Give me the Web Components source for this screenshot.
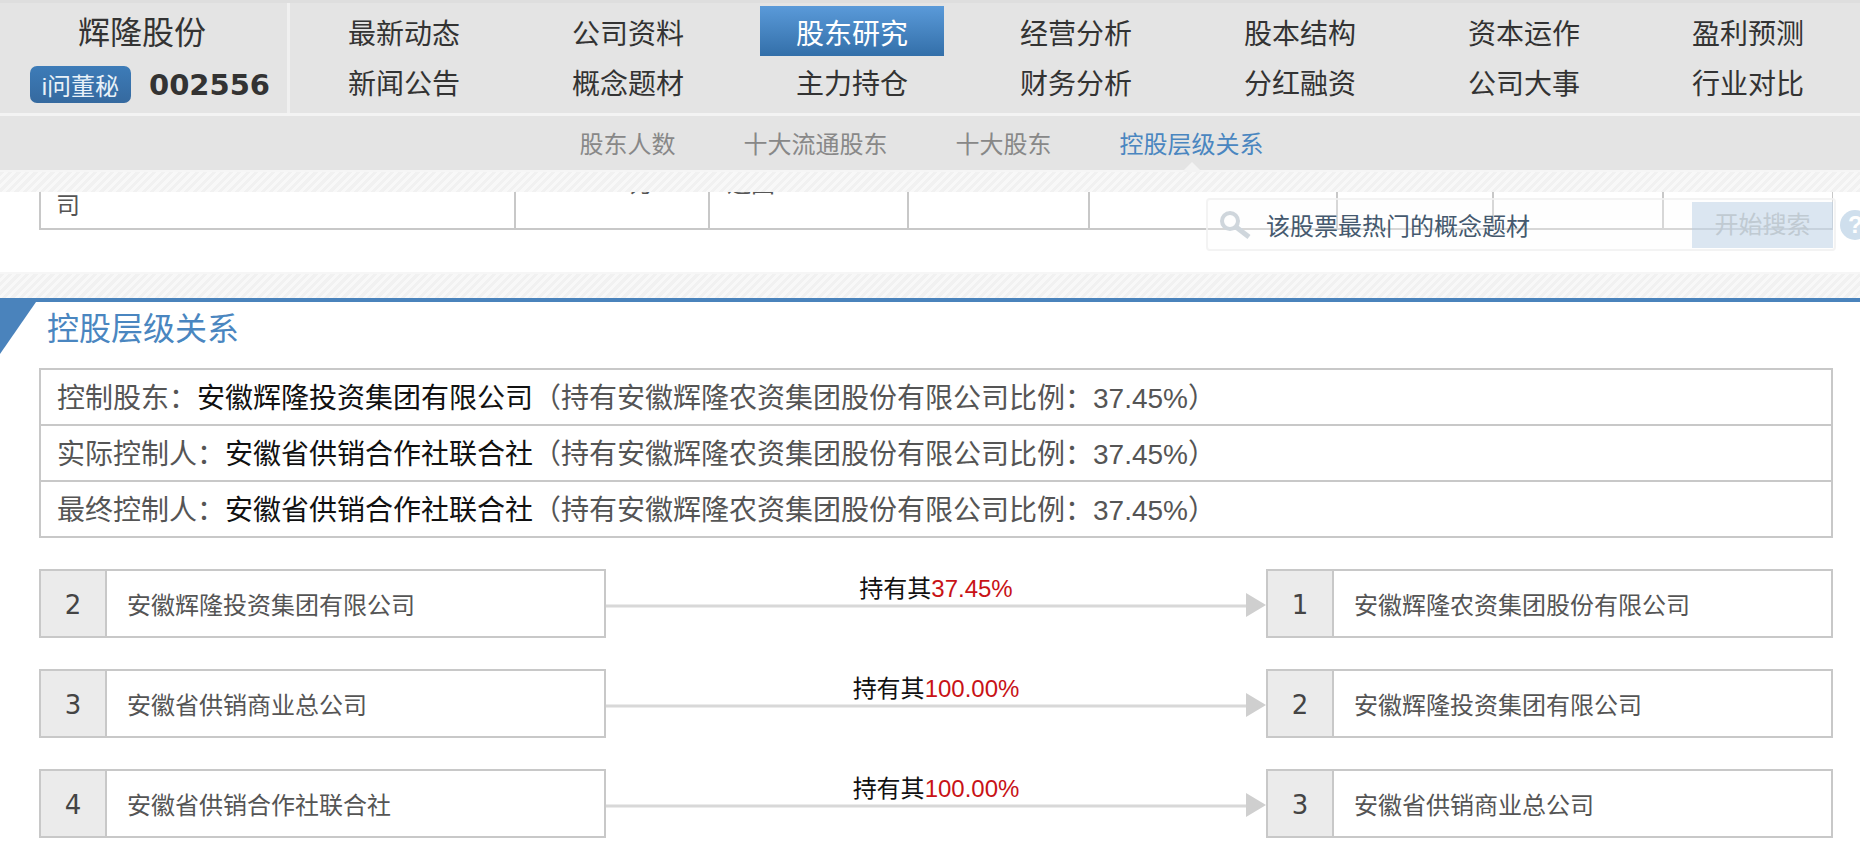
<!DOCTYPE html>
<html lang="zh-CN"><head><meta charset="utf-8"><title>控股层级关系</title>
<style>
html,body{margin:0;padding:0;height:862px;overflow:hidden;background:#fff}
body{font-family:"Liberation Sans","Noto Sans CJK SC",sans-serif;color:#333;font-size:24px}
</style></head><body>
<stock-header></stock-header>
<sub-nav></sub-nav>
<hatch-band h="22"></hatch-band>
<cut-table></cut-table>
<hatch-band h="26"></hatch-band>
<section-title>控股层级关系</section-title>
<control-table></control-table>
<chain-list></chain-list>
<search-overlay></search-overlay>
<script>
const def=(n,html)=>customElements.define(n,class extends HTMLElement{connectedCallback(){if(this.shadowRoot)return;const s=this.attachShadow({mode:'open'});s.innerHTML=typeof html==='function'?html(this):html;}});
const top1=['最新动态','公司资料','股东研究','经营分析','股本结构','资本运作','盈利预测'];
const top2=['新闻公告','概念题材','主力持仓','财务分析','分红融资','公司大事','行业对比'];
def('stock-header',()=>`<style>
:host{display:flex;background:#e4e4e4;box-sizing:border-box;border-top:3px solid #dedede;border-bottom:3px solid #f3f3f3;height:116px}
.l{box-sizing:border-box;border-right:3px solid #f0f0f0;width:290px;flex:none;display:flex;flex-direction:column;align-items:center;color:#333}
.n{font-size:32px;line-height:50px;margin-top:5px;margin-left:-3px}
.c{display:flex;align-items:center;gap:18px;margin-top:8px;margin-left:13px}
.b{width:101px;height:37px;border-radius:7px;background:linear-gradient(#3d7cb8,#35699f);color:#e8f1f8;font-size:24px;display:flex;align-items:center;justify-content:center;white-space:nowrap;overflow:hidden}
.d{font:bold 29px "DejaVu Sans",sans-serif;color:#333}
.g{flex:1;display:grid;grid-template-columns:repeat(7,1fr);grid-template-rows:50px 50px;padding:3px 0 0 2px}
.i{display:flex;align-items:center;justify-content:center;font-size:28px;color:#333}
.i span{display:block;width:184px;padding-top:6px;height:44px;line-height:46px;text-align:center}
.a span{color:#fff;background:linear-gradient(#5a9ad9,#336fa9)}
</style><div class="l"><div class="n">辉隆股份</div><div class="c"><div class="b">i问董秘</div><div class="d">002556</div></div></div>
<div class="g">${top1.concat(top2).map(t=>`<div class="i ${t=='股东研究'?'a':''}"><span>${t}</span></div>`).join('')}</div>`);
def('sub-nav',()=>`<style>
:host{display:flex;justify-content:center;gap:68px;height:54px;box-sizing:border-box;background:#e4e4e4;font-size:24px;line-height:58px;color:#888;padding-right:17px;position:relative}
.a{color:#4a86c0;position:relative}
.a::after{content:"";position:absolute;left:50%;bottom:-2px;margin-left:-10px;border:10px solid transparent;border-top:0;border-bottom-color:#f3f3f3}
</style><span>股东人数</span><span>十大流通股东</span><span>十大股东</span><span class="a">控股层级关系</span>`);
def('hatch-band',(e)=>`<style>:host{display:block;box-sizing:border-box;height:${e.getAttribute('h')}px;border-top:2px solid #f6f6f6;background:repeating-linear-gradient(135deg,#f1f1f1 0 3px,#f8f8f8 3px 6px)}</style>`);
def('cut-table',()=>`<style>
:host{display:block;height:80px;padding:0 27px 0 39px;box-sizing:border-box}
.t{display:grid;grid-template-columns:475px 194px 199px 181px 248px 156px 170px 170px;height:38px;border:solid #c8c8c8;border-width:0 0 2px 2px;box-sizing:border-box;overflow:hidden}
.t>div{border-right:2px solid #c8c8c8;font-size:24px;line-height:28px;padding-left:15px;color:#555;overflow:hidden}
.t>div.s{line-height:32px;padding:0}
.s span{display:block;margin-top:-24px}
</style><div class="t"><div>司</div><div class="s" style="padding-left:114px"><span>万</span></div><div class="s" style="padding-left:17px"><span>通国</span></div><div></div><div></div><div></div><div></div><div></div></div>`);
def('section-title',()=>`<style>
:host{display:block;height:70px;border-top:4px solid #4a83bc;box-sizing:border-box;position:relative;padding-left:47px;font-size:32px;line-height:54px;color:#4a86c0}
svg{position:absolute;left:0;top:0}
</style><svg width="36" height="52"><path d="M0 0H36L0 52Z" fill="#4a83bc"/></svg><slot></slot>`);
def('control-table',()=>{
const r=[['控制股东','安徽辉隆投资集团有限公司'],['实际控制人','安徽省供销合作社联合社'],['最终控制人','安徽省供销合作社联合社']];
return `<style>
:host{display:block;margin:0 27px 0 39px;border:solid #c8c8c8;border-width:2px 2px 0 2px}
.r{height:54px;line-height:58px;border-bottom:2px solid #c8c8c8;padding-left:16px;font-size:28px;color:#555;white-space:nowrap;overflow:hidden}
b{font-weight:normal;color:#111}
</style>${r.map(x=>`<div class="r">${x[0]}\uFF1A<b>${x[1]}</b>\uFF08持有安徽辉隆农资集团股份有限公司比例\uFF1A37.45%\uFF09</div>`).join('')}`});
customElements.define('chain-row',class extends HTMLElement{connectedCallback(){const g=a=>this.getAttribute(a);const s=this.attachShadow({mode:'open'});s.innerHTML=`<style>
:host{display:flex;height:69px;margin:0 27px 31px 39px;align-items:stretch}
.box{display:flex;border:2px solid #c8c8c8;box-sizing:border-box;height:69px;font-size:24px;color:#555;flex:none;width:567px}
.num{width:64px;background:#ebebeb;border-right:2px solid #c8c8c8;text-align:center;font:26px/69px "DejaVu Sans",sans-serif;flex:none;color:#444}
.tx{padding-left:20px;line-height:69px}
.m{flex:none;width:660px;position:relative}
.lb{text-align:center;font-size:24px;line-height:30px;margin-top:5px;color:#111}
.lb i{font-style:normal;color:#c81216}
svg{position:absolute;left:0;top:24px}
.right{flex:1;width:auto}
</style><div class="box"><div class="num">${g('a')}</div><div class="tx">${g('an')}</div></div>
<div class="m"><div class="lb">持有其<i>${g('p')}</i></div><svg width="660" height="24"><path d="M0 13H640" stroke="#d8d8d8" stroke-width="3"/><path d="M640 0L660 12L640 24Z" fill="#cfcfcf"/></svg></div>
<div class="box right"><div class="num">${g('b')}</div><div class="tx">${g('bn')}</div></div>`}});
def('chain-list',()=>`<style>:host{display:block;margin-top:31px}</style><slot></slot>`);
def('search-overlay',()=>`<style>
:host{position:absolute;left:1206px;top:198px;width:630px;height:53px;box-sizing:border-box;border:2px solid rgba(240,240,240,.8);border-radius:4px;background:rgba(252,252,252,.3);display:flex;align-items:center}
svg{position:absolute;left:10px;top:10px}
.t{margin-left:58px;font-size:24px;color:#45596e}
.btn{position:absolute;right:1px;top:2px;width:141px;height:46px;background:rgba(180,205,228,.47);color:#c0cad2;text-align:center;line-height:46px;font-size:24px}
.h{position:absolute;left:632px;top:10px;width:30px;height:30px;border-radius:50%;background:#cfdfed;color:#fff;font:bold 24px/30px "Liberation Sans",sans-serif;padding-left:8px;box-sizing:border-box}
</style><svg width="34" height="30" viewBox="0 0 34 30"><circle cx="12" cy="11" r="8" fill="none" stroke="#cfd6dc" stroke-width="4"/><path d="M18 17L31 27" stroke="#cfd6dc" stroke-width="5"/></svg><div class="t">该股票最热门的概念题材</div><div class="btn">开始搜索</div><div class="h">?</div>`);
const cl=document.querySelector('chain-list');
[['2','安徽辉隆投资集团有限公司','37.45%','1','安徽辉隆农资集团股份有限公司'],['3','安徽省供销商业总公司','100.00%','2','安徽辉隆投资集团有限公司'],['4','安徽省供销合作社联合社','100.00%','3','安徽省供销商业总公司']].forEach(r=>{const e=document.createElement('chain-row');e.setAttribute('a',r[0]);e.setAttribute('an',r[1]);e.setAttribute('p',r[2]);e.setAttribute('b',r[3]);e.setAttribute('bn',r[4]);cl.appendChild(e)});
</script></body></html>
